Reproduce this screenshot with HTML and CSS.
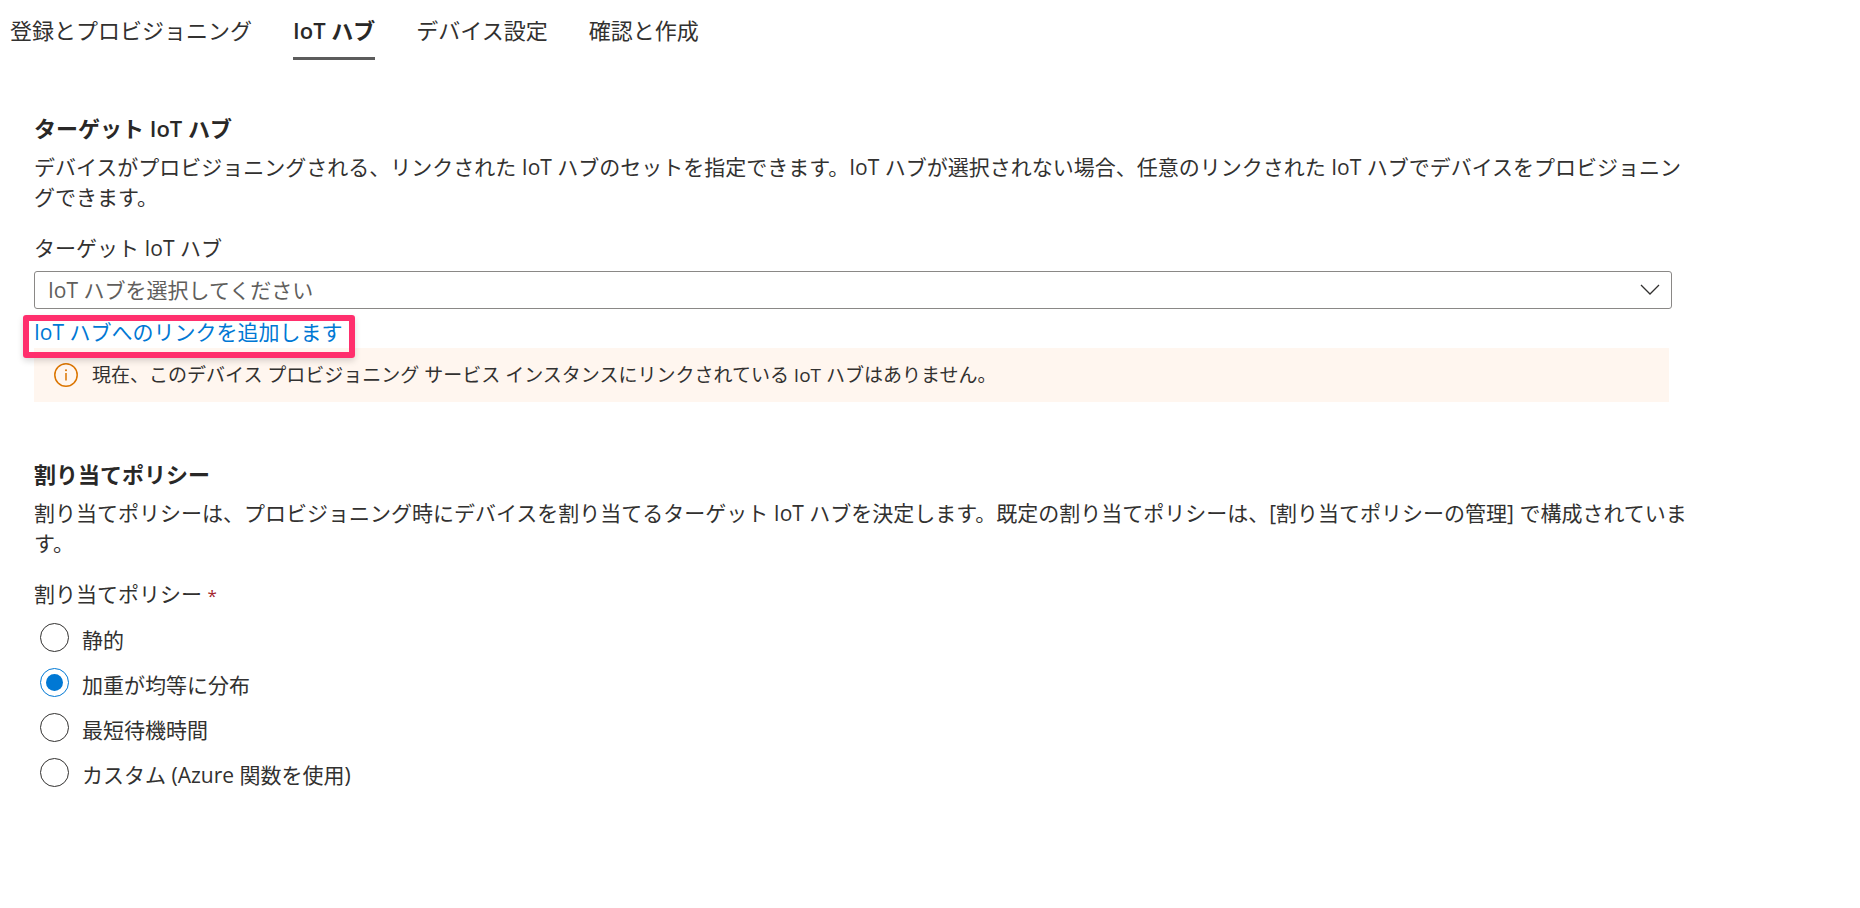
FILE: index.html
```html
<!DOCTYPE html>
<html lang="ja">
<head>
    <meta charset="UTF-8">
    <title>IoT ハブ</title>
    <link rel="stylesheet" href="styles.css">
</head>
<body>
<nav class="tabs">
    <a href="#" class="tab">登録とプロビジョニング</a>
    <a href="#" class="tab active">IoT ハブ</a>
    <a href="#" class="tab">デバイス設定</a>
    <a href="#" class="tab">確認と作成</a>
</nav>
<form class="container" name="enrollment-form">
    <section class="section">
        <h2>ターゲット IoT ハブ</h2>
        <p>デバイスがプロビジョニングされる、リンクされた IoT ハブのセットを指定できます。IoT ハブが選択されない場合、任意のリンクされた IoT ハブでデバイスをプロビジョニングできます。</p>
        <label class="field-label" for="targetHub">ターゲット IoT ハブ</label>
        <div class="select-box">
            <select id="targetHub" name="targetHub">
                <option value="">IoT ハブを選択してください</option>
            </select>
            <svg class="chevron" width="20" height="12" viewBox="0 0 20 12">
                <path d="M1 1 L10 10 L19 1" fill="none" stroke="#323130" stroke-width="1.3"/>
            </svg>
        </div>
        <div class="link-row">
            <a href="#" class="add-link">IoT ハブへのリンクを追加します</a>
        </div>
        <div class="message">
            <svg width="24" height="24" viewBox="0 0 24 24">
                <circle cx="12" cy="12" r="11.2" fill="none" stroke="#db7500" stroke-width="1.5"/>
                <circle cx="12" cy="7.3" r="1" fill="#db7500"/>
                <path d="M12 10 V17.5" stroke="#db7500" stroke-width="1.5"/>
            </svg>
            <span>現在、このデバイス プロビジョニング サービス インスタンスにリンクされている IoT ハブはありません。</span>
        </div>
    </section>
    <section class="section">
        <h2>割り当てポリシー</h2>
        <p>割り当てポリシーは、プロビジョニング時にデバイスを割り当てるターゲット IoT ハブを決定します。既定の割り当てポリシーは、[割り当てポリシーの管理] で構成されています。</p>
        <fieldset>
            <legend class="field-label">割り当てポリシー <span class="required">*</span></legend>
            <div class="radio-group">
                <input type="radio" name="policy" id="policyStatic" value="static">
                <label for="policyStatic">静的</label>
            </div>
            <div class="radio-group">
                <input type="radio" name="policy" id="policyHashed" value="hashed" checked>
                <label for="policyHashed">加重が均等に分布</label>
            </div>
            <div class="radio-group">
                <input type="radio" name="policy" id="policyLatency" value="geoLatency">
                <label for="policyLatency">最短待機時間</label>
            </div>
            <div class="radio-group">
                <input type="radio" name="policy" id="policyCustom" value="custom">
                <label for="policyCustom">カスタム (Azure 関数を使用)</label>
            </div>
        </fieldset>
    </section>
</form>
</body>
</html>
```
FILE: styles.css
```css
* {
    box-sizing: border-box;
}

body {
    margin: 0;
    background-color: #fff;
    color: #323130;
    font-family: "Open Sans", "Noto Sans CJK JP", sans-serif;
    font-size: 21px;
    line-height: 30px;
}

.tabs {
    display: flex;
    gap: 41px;
    padding-left: 10px;
    font-size: 22px;
}

.tab {
    padding: 15px 0 12px;
    border-bottom: 3px solid transparent;
    color: inherit;
    text-decoration: none;
}

.tab.active {
    border-bottom-color: #5c5c5c;
    color: #292827;
    font-weight: 600;
}

.container {
    max-width: 1688px;
    padding: 50px 0 0 34px;
}

.section {
    margin-bottom: 54px;
}

h2 {
    margin: 0 0 6px;
    color: #292827;
    font-size: 22px;
    font-weight: 600;
    line-height: 36px;
}

p {
    margin: 0 0 21px;
}

.field-label {
    display: block;
    padding: 0;
}

.select-box {
    position: relative;
    margin: 8px 16px 8px 0;
}

select {
    appearance: none;
    display: block;
    width: 100%;
    height: 38px;
    padding: 0 48px 0 13px;
    border: 1px solid #8a8886;
    border-radius: 3px;
    background-color: #fff;
    color: #605e5c;
    font: inherit;
}

.chevron {
    position: absolute;
    top: 13px;
    right: 12px;
    pointer-events: none;
}

.add-link {
    position: relative;
    color: #0078d4;
    text-decoration: none;
}

/* highlight frame over the link */
.add-link::after {
    content: "";
    position: absolute;
    top: -3px;
    right: -12px;
    bottom: -12px;
    left: -11px;
    border: 6px solid #ff2f6d;
    border-radius: 3px;
    box-shadow: 0 3px 6px rgba(0, 0, 0, 0.15);
}

.message {
    display: flex;
    align-items: center;
    gap: 14px;
    min-height: 54px;
    margin: 1px 19px 0 0;
    padding: 0 20px;
    background-color: #fff6ef;
    font-size: 19px;
}

.message svg {
    flex: none;
}

fieldset {
    margin: 0;
    padding: 0;
    border: none;
}

legend {
    margin-bottom: 6px;
}

.required {
    color: #a4262c;
    font-size: 17px;
    line-height: 1;
}

.radio-group {
    display: flex;
    align-items: center;
    gap: 13px;
    height: 45px;
    padding-left: 6px;
}

.radio-group label {
    padding-top: 4px;
}

input[type=radio] {
    appearance: none;
    display: grid;
    place-items: center;
    width: 29px;
    height: 29px;
    margin: 0;
    border: 1px solid #323130;
    border-radius: 50%;
}

input[type=radio]:checked {
    border-color: #0078d4;
}

input[type=radio]:checked::before {
    content: "";
    width: 17px;
    height: 17px;
    border-radius: 50%;
    background-color: #0078d4;
}
```
